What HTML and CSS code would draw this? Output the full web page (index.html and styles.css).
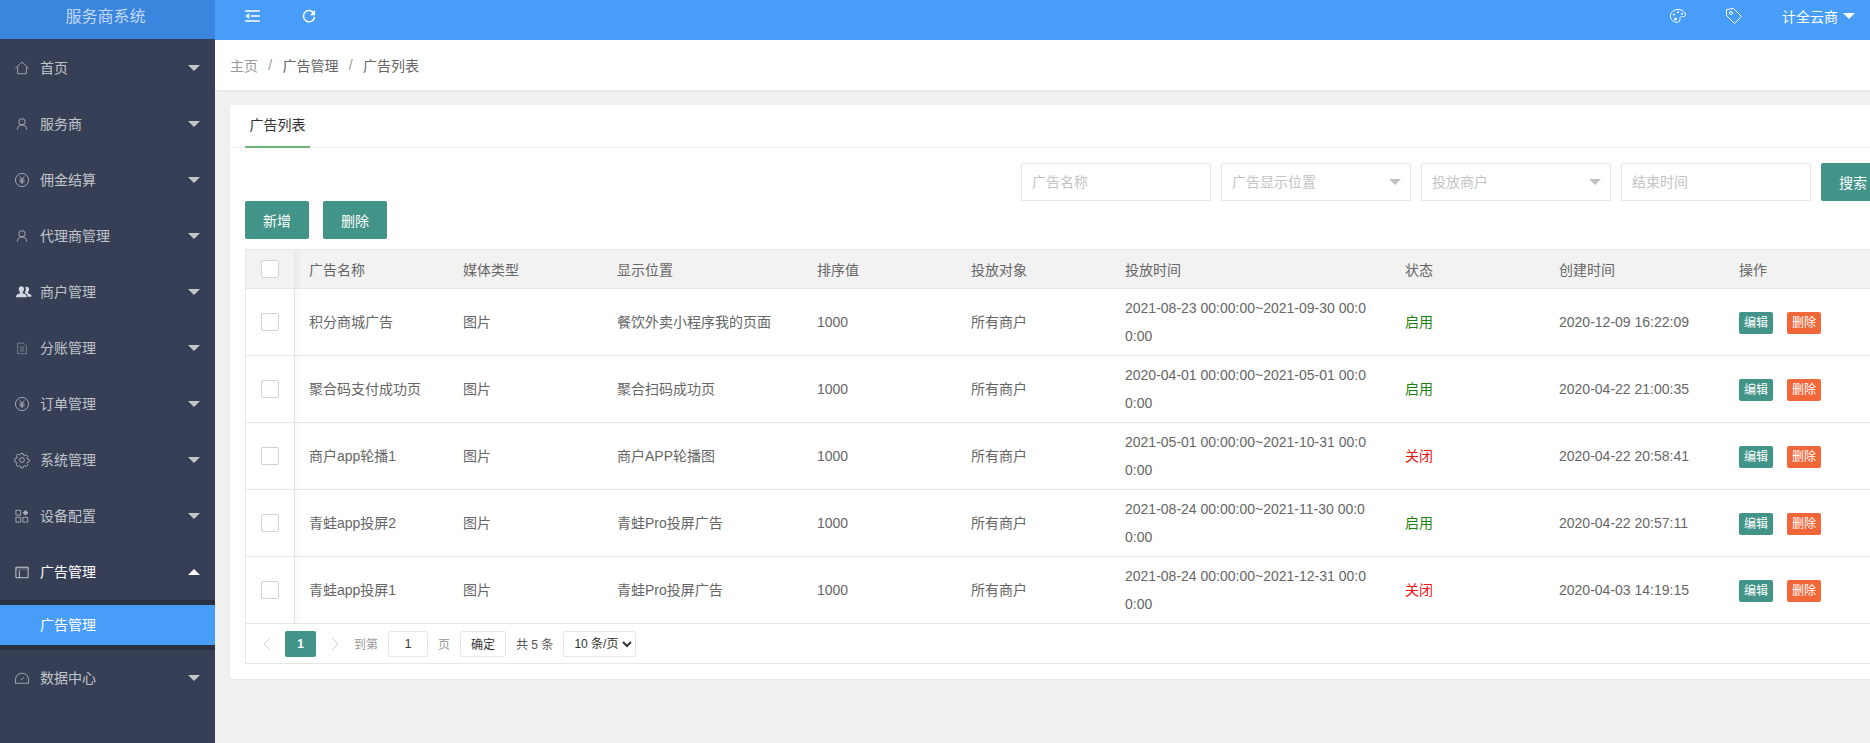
FILE: index.html
```html
<!DOCTYPE html>
<html lang="zh-CN">
<head>
<meta charset="utf-8">
<title>广告列表</title>
<link rel="stylesheet" href="styles.css">
</head>
<body>
<aside class="sidebar">
  <div class="logo">服务商系统</div>
  <nav class="nav">
    <a class="nav-item"><svg class="nav-icon" viewBox="0 0 16 16"><path d="M.5 8.500 8 1l7.500 7.500M3 7v7.500h10V7"/></svg><span>首页</span><i class="caret"></i></a>
    <a class="nav-item"><svg class="nav-icon" viewBox="0 0 16 16"><circle cx="8" cy="5.500" r="3.600"/><path d="M2.500 14.500c.3-3.600 2.500-5.500 5.500-5.500s5.200 1.900 5.500 5.500"/></svg><span>服务商</span><i class="caret"></i></a>
    <a class="nav-item"><svg class="nav-icon" viewBox="0 0 16 16"><circle cx="8" cy="8" r="7.500"/><path d="M5.500 4 8 7.500 10.500 4M8 7.500V12.500M5 8h6M5 10.200h6"/></svg><span>佣金结算</span><i class="caret"></i></a>
    <a class="nav-item"><svg class="nav-icon" viewBox="0 0 16 16"><circle cx="8" cy="5.500" r="3.600"/><path d="M2.500 14.500c.3-3.600 2.500-5.500 5.500-5.500s5.200 1.900 5.500 5.500"/></svg><span>代理商管理</span><i class="caret"></i></a>
    <a class="nav-item"><svg class="nav-icon nav-icon-solid" viewBox="0 0 18 16"><path d="M6 1.500c2 0 3 1.500 3 3.200 0 1.500-.7 2.800-1.500 3.500v1.300c2 .7 4 1.400 4.500 3v1.500H0v-1.500c.5-1.600 2.500-2.300 4.500-3V8.200C3.700 7.500 3 6.200 3 4.700c0-1.700 1-3.200 3-3.200z"/><path d="M12 2c1.800 0 2.800 1.400 2.800 3 0 1.400-.6 2.500-1.300 3.100v1.200c1.800.6 3.600 1.300 4 2.700v1.500H13v-1.700c-.5-1.200-1.800-2-3-2.500V8.200c.9-.9 1-2.200 1-3.500 0-1-.2-1.800-.6-2.400.5-.2 1-.3 1.600-.3z"/></svg><span>商户管理</span><i class="caret"></i></a>
    <a class="nav-item"><svg class="nav-icon nav-icon-dim" viewBox="0 0 16 16"><path d="M3 2.500h7l3 3v9H3zM5.500 7h5M5.500 9.200h5M5.500 11.400h5"/></svg><span>分账管理</span><i class="caret"></i></a>
    <a class="nav-item"><svg class="nav-icon" viewBox="0 0 16 16"><circle cx="8" cy="8" r="7.500"/><path d="M5.500 4 8 7.500 10.500 4M8 7.500V12.500M5 8h6M5 10.200h6"/></svg><span>订单管理</span><i class="caret"></i></a>
    <a class="nav-item"><svg class="nav-icon" viewBox="0 0 16 16"><circle cx="8" cy="8" r="2.800"/><path d="M6.700.5h2.600l.4 1.900 1.500.7 1.700-1 1.800 1.800-1 1.700.7 1.500 1.900.4v2.600l-1.900.4-.7 1.500 1 1.700-1.800 1.800-1.700-1-1.500.7-.4 1.900H6.700l-.4-1.900-1.500-.7-1.700 1-1.800-1.800 1-1.700-.7-1.500-1.900-.4V6.700l1.900-.4.7-1.500-1-1.700 1.800-1.800 1.700 1 1.500-.7z"/></svg><span>系统管理</span><i class="caret"></i></a>
    <a class="nav-item"><svg class="nav-icon" viewBox="0 0 16 16"><path d="M1 1.500h5.500V7H1zM1 9.500h5.500V15H1zM9 9.500h5.500V15H9z"/><path class="fill" d="M12 1l3.200 3.200L12 7.400 8.800 4.200z"/></svg><span>设备配置</span><i class="caret"></i></a>
    <a class="nav-item is-open"><svg class="nav-icon" viewBox="0 0 16 16"><path d="M1 2.500h14v12H1zM5 6.500v8"/><path class="fill" d="M1 2.500h14v3.500H1z"/></svg><span>广告管理</span><i class="caret caret-up"></i></a>
    <div class="subnav"><a class="subnav-item">广告管理</a></div>
    <a class="nav-item"><svg class="nav-icon" viewBox="0 0 16 16"><path d="M.5 14v-4a7.500 7.500 0 0 1 15 0v4zM6.500 10.500 10 7.500"/></svg><span>数据中心</span><i class="caret"></i></a>
  </nav>
</aside>
<div class="main">
  <header class="topbar">
    <svg class="top-icon shrink" viewBox="0 0 16 13"><path d="M0 1h16M6 6.500h10M0 12h16"/><path class="fill" d="M0 6.500 4.500 3.500v6z"/></svg>
    <svg class="top-icon refresh" viewBox="0 0 16 16"><path d="M13.700 5.200A6.400 6.400 0 1 0 14.400 9"/><path class="fill" d="M15 1v6H9z"/></svg>
    <div class="top-right">
      <svg class="top-icon thin" viewBox="0 0 16 14"><path d="M8 .5c4.300 0 7.500 2.600 7.500 5.500 0 1.400-1.400 1.900-2.800 1.600-1.700-.3-2.700.4-2.700 1.900 0 1.800-.5 4-2.600 4C3.400 13.500.5 10.500.5 7 .5 3.400 3.700.5 8 .5z"/><circle class="fill" cx="4" cy="5.500" r="1"/><circle class="fill" cx="8" cy="3.300" r="1"/><circle class="fill" cx="12" cy="4.800" r="1"/><circle class="fill" cx="5.500" cy="10" r="1.500"/></svg>
      <svg class="top-icon thin" viewBox="0 0 16 16"><path d="M.5 1.500 7.500.5 15.500 8.500 8.500 15.500.5 7.500z"/><circle cx="5" cy="5" r="1.500"/></svg>
      <div class="account"><span>计全云商</span><i class="caret caret-white"></i></div>
    </div>
  </header>
  <div class="breadcrumb">
    <span class="crumb-muted">主页</span><span class="crumb-sep">/</span><span>广告管理</span><span class="crumb-sep">/</span><span>广告列表</span>
  </div>
  <section class="card">
    <div class="tabs"><div class="tab">广告列表</div></div>
    <div class="card-body">
      <form class="filters">
        <input class="field" placeholder="广告名称">
        <div class="select-field"><input class="field" placeholder="广告显示位置" readonly><i class="select-caret"></i></div>
        <div class="select-field"><input class="field" placeholder="投放商户" readonly><i class="select-caret"></i></div>
        <input class="field" placeholder="结束时间">
        <button type="button" class="btn">搜索</button>
      </form>
      <div class="actions">
        <button type="button" class="btn">新增</button>
        <button type="button" class="btn">删除</button>
      </div>
      <div class="table-box">
        <table class="table">
          <colgroup>
            <col class="c-check"><col class="c-name"><col class="c-media"><col class="c-pos"><col class="c-sort"><col class="c-target"><col class="c-time"><col class="c-status"><col class="c-created"><col class="c-op">
          </colgroup>
          <thead>
            <tr><th class="check-cell"><span class="checkbox"></span></th><th class="after-check">广告名称</th><th>媒体类型</th><th>显示位置</th><th>排序值</th><th>投放对象</th><th>投放时间</th><th>状态</th><th>创建时间</th><th>操作</th></tr>
          </thead>
          <tbody>
            <tr><td class="check-cell"><span class="checkbox"></span></td><td class="after-check">积分商城广告</td><td>图片</td><td>餐饮外卖小程序我的页面</td><td>1000</td><td>所有商户</td><td>2021-08-23 00:00:00~2021-09-30 00:00:00</td><td class="on">启用</td><td>2020-12-09 16:22:09</td><td><div class="ops"><a class="tag">编辑</a><a class="tag tag-del">删除</a></div></td></tr>
            <tr><td class="check-cell"><span class="checkbox"></span></td><td class="after-check">聚合码支付成功页</td><td>图片</td><td>聚合扫码成功页</td><td>1000</td><td>所有商户</td><td>2020-04-01 00:00:00~2021-05-01 00:00:00</td><td class="on">启用</td><td>2020-04-22 21:00:35</td><td><div class="ops"><a class="tag">编辑</a><a class="tag tag-del">删除</a></div></td></tr>
            <tr><td class="check-cell"><span class="checkbox"></span></td><td class="after-check">商户app轮播1</td><td>图片</td><td>商户APP轮播图</td><td>1000</td><td>所有商户</td><td>2021-05-01 00:00:00~2021-10-31 00:00:00</td><td class="off">关闭</td><td>2020-04-22 20:58:41</td><td><div class="ops"><a class="tag">编辑</a><a class="tag tag-del">删除</a></div></td></tr>
            <tr><td class="check-cell"><span class="checkbox"></span></td><td class="after-check">青蛙app投屏2</td><td>图片</td><td>青蛙Pro投屏广告</td><td>1000</td><td>所有商户</td><td>2021-08-24 00:00:00~2021-11-30 00:00:00</td><td class="on">启用</td><td>2020-04-22 20:57:11</td><td><div class="ops"><a class="tag">编辑</a><a class="tag tag-del">删除</a></div></td></tr>
            <tr><td class="check-cell"><span class="checkbox"></span></td><td class="after-check">青蛙app投屏1</td><td>图片</td><td>青蛙Pro投屏广告</td><td>1000</td><td>所有商户</td><td>2021-08-24 00:00:00~2021-12-31 00:00:00</td><td class="off">关闭</td><td>2020-04-03 14:19:15</td><td><div class="ops"><a class="tag">编辑</a><a class="tag tag-del">删除</a></div></td></tr>
          </tbody>
        </table>
        <div class="pager">
          <svg class="pager-arrow prev" viewBox="0 0 8 14"><path d="M7 1 1 7l6 6"/></svg>
          <span class="page-current">1</span>
          <svg class="pager-arrow next" viewBox="0 0 8 14"><path d="M1 1l6 6-6 6"/></svg>
          <span class="pager-label goto">到第</span>
          <input class="page-input" value="1">
          <span class="pager-label page-unit">页</span>
          <button type="button" class="page-ok">确定</button>
          <span class="pager-total">共 5 条</span>
          <select class="page-size"><option>10 条/页</option></select>
        </div>
      </div>
    </div>
  </section>
</div>
</body>
</html>
```

FILE: styles.css
```css
* { box-sizing: border-box; }
html, body { margin: 0; height: 100%; }
body {
  display: flex;
  height: 743px;
  overflow: hidden;
  background: #f0f0f0;
  font-family: "Liberation Sans", "Noto Sans CJK SC", sans-serif;
  font-size: 14px;
  color: #666;
}
i { font-style: normal; }

/* sidebar */
.sidebar { flex: 0 0 215px; background: #363f55; }
.logo {
  height: 39px;
  margin-bottom: 1px;
  padding: 4px 4px 10px 0;
  background: #3a85de;
  color: rgba(255, 255, 255, .7);
  font-size: 16px;
  line-height: 25px;
  text-align: center;
}
.nav-item {
  display: flex;
  align-items: center;
  height: 56px;
  padding: 0 15px;
  color: rgba(255, 255, 255, .7);
}
.nav-item span { flex: 1; margin-left: 11px; padding-bottom: 2px; }
.nav-item.is-open { color: #fff; }
.nav-icon {
  flex: 0 0 14px;
  width: 14px;
  height: 14px;
  fill: none;
  stroke: rgba(255, 255, 255, .6);
  stroke-width: 1;
  overflow: visible;
}
.nav-icon .fill { fill: rgba(255, 255, 255, .6); stroke: none; }
.nav-icon-solid { flex-basis: 18px; width: 18px; margin-right: -4px; fill: rgba(255, 255, 255, .8); stroke: none; }
.nav-icon-dim { stroke: rgba(255, 255, 255, .35); }
.is-open .nav-icon { stroke: rgba(255, 255, 255, .8); }
.is-open .nav-icon .fill { fill: rgba(255, 255, 255, .15); }
.caret {
  width: 0;
  height: 0;
  border-style: solid;
  border-width: 6px 6px 0;
  border-color: rgba(255, 255, 255, .7) transparent transparent;
}
.caret-up { border-width: 0 6px 6px; border-color: transparent transparent #fff; }
.caret-white { border-top-color: #fff; }
.subnav { padding: 5px 0; background: #2a3142; }
.subnav-item {
  display: block;
  height: 40px;
  padding-left: 40px;
  background: #479df8;
  color: #fff;
  line-height: 40px;
}

/* top */
.main { flex: 1; min-width: 0; display: flex; flex-direction: column; overflow: hidden; }
.topbar {
  display: flex;
  flex: 0 0 40px;
  align-items: center;
  padding: 0 15px 9px 30px;
  background: #479df8;
  color: #fff;
}
.top-icon { fill: none; stroke: #fff; overflow: visible; }
.top-icon .fill { fill: #fff; stroke: none; }
.shrink { width: 15px; height: 12px; stroke-width: 1.6; }
.refresh { width: 14px; height: 14px; margin-left: 42px; stroke-width: 1.8; }
.thin { width: 16px; height: 16px; stroke-width: 1; }
.top-right { display: flex; align-items: center; gap: 40px; margin-left: auto; }
.account { display: flex; align-items: center; gap: 5px; margin-left: 0; }

/* breadcrumb */
.breadcrumb {
  display: flex;
  align-items: center;
  flex: 0 0 50px;
  padding: 0 15px;
  background: #fff;
  box-shadow: 0 1px 2px rgba(0, 0, 0, .06);
}
.crumb-muted { color: #999; }
.crumb-sep { width: 24.5px; color: #999; text-align: center; }

/* card */
.card {
  width: 1700px;
  margin: 15px 0 0 15px;
  background: #fff;
  border-radius: 2px;
  box-shadow: 0 1px 2px rgba(0, 0, 0, .04);
}
.tabs { height: 43px; border-bottom: 1px solid #f0f0f0; padding-left: 15px; }
.tab {
  width: 65px;
  height: 43px;
  border-bottom: 2px solid #6db47c;
  color: #333;
  line-height: 41px;
  text-align: center;
}
.card-body { padding: 15px 15px 15px; }
.filters { display: flex; justify-content: flex-end; gap: 10px; padding-right: 30px; }
.field {
  display: block;
  width: 190px;
  height: 38px;
  padding: 0 10px;
  border: 1px solid #e6e6e6;
  border-radius: 2px;
  background: #fff;
  color: #666;
  font: inherit;
  outline: none;
}
.field::placeholder { color: #c4c4c4; }
.select-field { position: relative; }
.select-caret {
  position: absolute;
  top: 16px;
  right: 10px;
  width: 0;
  height: 0;
  border-style: solid;
  border-width: 6px 6px 0;
  border-color: #c2c2c2 transparent transparent;
}
.btn {
  width: 64px;
  height: 38px;
  padding: 0;
  border: 0;
  border-radius: 2px;
  background: #429488;
  color: #fff;
  font: inherit;
}
.actions { display: flex; gap: 14px; }
.table-box { margin-top: 10px; border: 1px solid #e6e6e6; background: #fff; }
.table {
  width: 100%;
  border-spacing: 0;
  border-collapse: separate;
  table-layout: fixed;
}
.c-check { width: 49px; }
.c-name, .c-media, .c-sort, .c-target, .c-status { width: 154px; }
.c-pos { width: 200px; }
.c-time { width: 280px; }
.c-created { width: 180px; }
.table th, .table td {
  padding: 0 15px 0 14px;
  border-bottom: 1px solid #e6e6e6;
  text-align: left;
  font-weight: 400;
  word-break: break-all;
}
.table th { height: 39px; background: #f2f2f2; }
.table td { height: 67px; line-height: 28px; }
.table .check-cell { padding: 0; border-right: 1px solid #e6e6e6; text-align: center; }
.table .after-check { background-image: linear-gradient(to right, rgba(0, 0, 0, .03), rgba(0, 0, 0, 0) 8px); background-size: 8px 100%; background-repeat: no-repeat; }
.checkbox {
  display: block;
  width: 18px;
  height: 18px;
  margin: 0 auto;
  border: 1px solid #d2d2d2;
  border-radius: 2px;
  background: #fff;
}
.on { color: #1f7f10; }
.table .off { color: #f01414; }
.ops { display: flex; gap: 14px; padding-top: 2px; }
.tag {
  width: 34px;
  height: 22px;
  border-radius: 2px;
  background: #429488;
  color: #fff;
  font-size: 12px;
  line-height: 22px;
  text-align: center;
}
.tag-del { background: #f16739; }

/* pager */
.pager { display: flex; align-items: center; height: 39px; font-size: 12px; }
.pager-arrow { width: 8px; height: 14px; fill: none; stroke: #d2d2d2; stroke-width: 1; }
.prev { margin-left: 17px; }
.page-current {
  width: 31px;
  height: 26px;
  margin-left: 14px;
  border-radius: 2px;
  background: #429488;
  color: #fff;
  font-weight: 700;
  line-height: 26px;
  text-align: center;
}
.next { margin-left: 15px; }
.pager-label { color: #999; }
.goto { margin-left: 15px; }
.page-input {
  width: 40px;
  height: 26px;
  margin-left: 10px;
  border: 1px solid #e6e6e6;
  border-radius: 2px;
  color: #333;
  font: inherit;
  text-align: center;
  outline: none;
}
.page-unit { margin-left: 10px; }
.page-ok {
  width: 46px;
  height: 26px;
  margin-left: 10px;
  padding: 0;
  border: 1px solid #e6e6e6;
  border-radius: 2px;
  background: #fff;
  color: #333;
  font: inherit;
}
.pager-total { margin-left: 10px; color: #555; }
.page-size {
  width: 73px;
  height: 26px;
  margin-left: 10px;
  padding-left: 6px;
  border: 1px solid #e6e6e6;
  border-radius: 2px;
  background-color: #fff;
  color: #333;
  font: inherit;
  outline: none;
}
```
